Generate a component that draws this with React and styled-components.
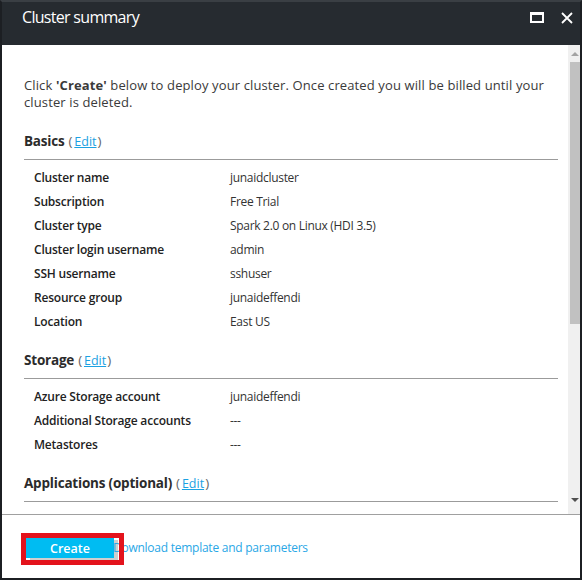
import React from 'react';
import styled, { createGlobalStyle } from 'styled-components';

const Global = createGlobalStyle`
  html, body { margin: 0; padding: 0; background: #fff; }
  body { font-family: "Open Sans", "Noto Sans", sans-serif; }
`;

const Frame = styled.div`
  box-sizing: border-box;
  width: 582px;
  height: 580px;
  border: 2px solid #1c1f23;
  border-top-color: #3a3f44;
  display: flex;
  flex-direction: column;
  background: #fff;
  overflow: hidden;
`;

const Header = styled.header`
  flex: 0 0 43px;
  background: #262b30;
  display: flex;
  align-items: flex-start;
  justify-content: space-between;
  padding: 0 7px 0 20px;
`;

const Title = styled.h1`
  margin: 3px 0 0;
  font-size: 16px;
  font-weight: 400;
  color: #fff;
  line-height: 24px;
  letter-spacing: -0.7px;
`;

const HeaderActions = styled.div`
  display: flex;
  align-items: center;
  gap: 17px;
  margin-top: 8px;
`;

const IconButton = styled.span`
  display: flex;
  width: ${p => p.$w}px;
  height: 15px;
  align-items: center;
  justify-content: center;
`;

const Body = styled.div`
  flex: 1;
  display: flex;
  min-height: 0;
`;

const Content = styled.div`
  flex: 1;
  overflow: hidden;
  padding: 32px 10px 0 22px;
  color: #333;
  display: flex;
  flex-direction: column;
`;

const Intro = styled.p`
  margin: 0 0 3px;
  font-size: 13px;
  line-height: 17px;
  color: #3a3a3a;
  letter-spacing: 0.12px;
`;

const Section = styled.section`
  margin-top: 17px;
  flex: none;
`;

const SectionHead = styled.h2`
  margin: 0;
  padding-bottom: 7px;
  border-bottom: 1px solid #9b9b9b;
  font-size: 13.5px;
  line-height: 20px;
  font-weight: 700;
  color: #2b2b2b;
  letter-spacing: -0.2px;
`;

const Paren = styled.span`
  font-weight: 400;
  color: #666;
  margin-left: ${p => (p.$open ? '4px' : '1px')};
  margin-right: ${p => (p.$open ? '2px' : '0')};
`;

const EditLink = styled.a`
  font-weight: 400;
  font-size: 12.5px;
  color: #1ba1e2;
  text-decoration: underline;
  letter-spacing: 0;
`;

const Rows = styled.div`
  margin-top: 5px;
  display: grid;
  grid-template-columns: 196px 1fr;
  grid-auto-rows: 24px;
  align-items: center;
  padding-left: 10px;
`;

const Label = styled.div`
  font-size: 12px;
  font-weight: 600;
  color: #222;
  white-space: nowrap;
  letter-spacing: -0.2px;
`;

const Value = styled.div`
  font-size: 12px;
  color: #333;
  white-space: nowrap;
  letter-spacing: -0.3px;
`;

const Scrollbar = styled.div`
  flex: 0 0 12px;
  background: #f0f0f0;
  display: flex;
  flex-direction: column;
  align-items: flex-end;
`;

const Arrow = styled.div`
  width: 10px;
  height: ${p => (p.$down ? '18px' : '17px')};
  display: flex;
  align-items: ${p => (p.$down ? 'flex-start' : 'flex-end')};
  justify-content: center;
  margin-top: ${p => (p.$down ? 'auto' : '0')};
  padding-bottom: ${p => (p.$down ? '0' : '6px')};
  padding-top: ${p => (p.$down ? '2px' : '0')};
  box-sizing: border-box;
`;

const Thumb = styled.div`
  width: 10px;
  height: 262px;
  background: #c1c1c1;
`;

const Footer = styled.footer`
  box-sizing: border-box;
  flex: 0 0 64px;
  border-top: 1px solid #a0a0a0;
  display: flex;
  align-items: flex-start;
  padding: 23px 0 0 24px;
  position: relative;
`;

const CreateButton = styled.button`
  flex: none;
  width: 88px;
  height: 20px;
  border: 0;
  padding: 0;
  background: #00bcf2;
  color: #fff;
  font-family: inherit;
  font-size: 12.5px;
  font-weight: 600;
  box-shadow: 4px 2px 0 #cfcfcf;
  cursor: pointer;
`;

const TemplateLink = styled.a`
  margin-left: -1px;
  font-size: 12px;
  line-height: 20px;
  color: #2aa7e6;
  text-decoration: none;
  letter-spacing: -0.25px;
`;

const Highlight = styled.div`
  position: absolute;
  left: 19px;
  top: 18px;
  width: 103px;
  height: 32px;
  box-sizing: border-box;
  border: 5px solid #e3131c;
  pointer-events: none;
`;

const sections = [
  {
    title: 'Basics',
    rows: [
      ['Cluster name', 'junaidcluster'],
      ['Subscription', 'Free Trial'],
      ['Cluster type', 'Spark 2.0 on Linux (HDI 3.5)'],
      ['Cluster login username', 'admin'],
      ['SSH username', 'sshuser'],
      ['Resource group', 'junaideffendi'],
      ['Location', 'East US'],
    ],
  },
  {
    title: 'Storage',
    rows: [
      ['Azure Storage account', 'junaideffendi'],
      ['Additional Storage accounts', '---'],
      ['Metastores', '---'],
    ],
  },
  {
    title: 'Applications (optional)',
    rows: [['Application details', '---']],
  },
];

export default function App() {
  return (
    <>
      <Global />
      <Frame>
        <Header>
          <Title>Cluster summary</Title>
          <HeaderActions>
            <IconButton $w={14}>
              <svg width="14" height="11" viewBox="0 0 14 11">
                <rect x="1" y="1.5" width="12" height="8.5" fill="none" stroke="#fff" strokeWidth="2" />
                <rect x="0" y="0" width="14" height="3" fill="#fff" />
              </svg>
            </IconButton>
            <IconButton $w={12}>
              <svg width="12" height="12" viewBox="0 0 12 12">
                <path d="M1 1 L11 11 M11 1 L1 11" stroke="#fff" strokeWidth="1.8" />
              </svg>
            </IconButton>
          </HeaderActions>
        </Header>
        <Body>
          <Content>
            <Intro>
              Click <b>'Create'</b> below to deploy your cluster. Once created you will be billed until your cluster is deleted.
            </Intro>
            {sections.map(s => (
              <Section key={s.title}>
                <SectionHead>
                  {s.title}
                  <Paren $open>(</Paren>
                  <EditLink href="#">Edit</EditLink>
                  <Paren>)</Paren>
                </SectionHead>
                <Rows>
                  {s.rows.map(([k, v]) => (
                    <React.Fragment key={k}>
                      <Label>{k}</Label>
                      <Value>{v}</Value>
                    </React.Fragment>
                  ))}
                </Rows>
              </Section>
            ))}
          </Content>
          <Scrollbar>
            <Arrow>
              <svg width="8" height="4" viewBox="0 0 8 4">
                <path d="M0 4 L4 0 L8 4 Z" fill="#a3a3a3" />
              </svg>
            </Arrow>
            <Thumb />
            <Arrow $down>
              <svg width="8" height="4" viewBox="0 0 8 4">
                <path d="M0 0 L8 0 L4 4 Z" fill="#505050" />
              </svg>
            </Arrow>
          </Scrollbar>
        </Body>
        <Footer>
          <CreateButton>Create</CreateButton>
          <TemplateLink href="#">Download template and parameters</TemplateLink>
          <Highlight />
        </Footer>
      </Frame>
    </>
  );
}
